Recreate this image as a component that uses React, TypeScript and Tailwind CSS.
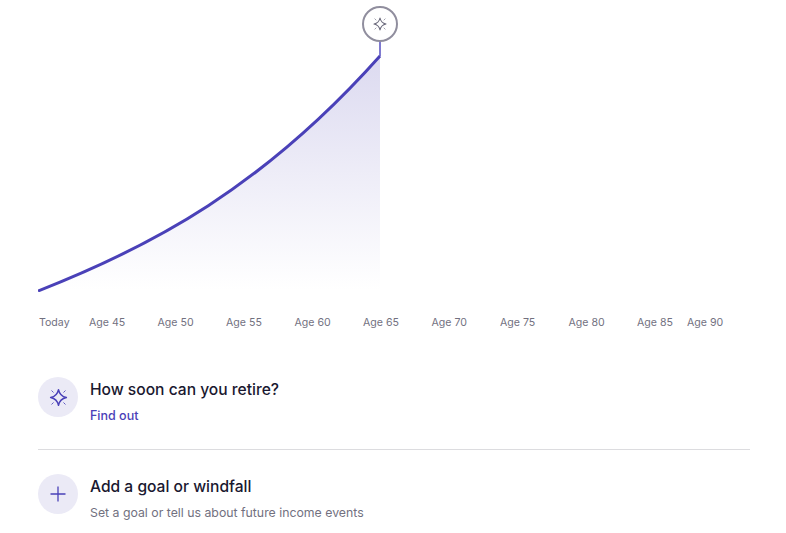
function Sparkle({ size, color }: { size: number; color: string }) {
  return (
    <svg width={size} height={size} viewBox="0 0 20 20" fill="none" stroke={color} strokeLinecap="round" strokeLinejoin="round">
      <path d="M10 2.5C10.8 6.5 13.5 9.2 17.5 10C13.5 10.8 10.8 13.5 10 17.5C9.2 13.5 6.5 10.8 2.5 10C6.5 9.2 9.2 6.5 10 2.5Z" strokeWidth="1.4" />
      <path d="M3.6 3.6L5 5M16.4 3.6L15 5M3.6 16.4L5 15M16.4 16.4L15 15" strokeWidth="0.8" />
    </svg>
  );
}

const ages = ["Age 45", "Age 50", "Age 55", "Age 60", "Age 65", "Age 70", "Age 75", "Age 80"];

export default function App() {
  return (
    <div className="w-[786px] h-[533px] overflow-hidden bg-white pl-[38px] pr-[36px] font-['Inter',sans-serif]">
      <div className="relative h-[290px] pt-[5px]">
        <svg width="712" height="292" viewBox="0 0 712 292" fill="none" className="block absolute left-0 top-0">
          <defs>
            <linearGradient id="area" x1="0" y1="56" x2="0" y2="290" gradientUnits="userSpaceOnUse">
              <stop offset="0" stopColor="#dcdaf0" />
              <stop offset="1" stopColor="#ffffff" />
            </linearGradient>
          </defs>
          <path d="M0 291C115 246 225 187 342 56V291Z" fill="url(#area)" />
          <path d="M342 41V56" stroke="#7f7ad0" strokeWidth="2" />
          <path d="M0 291C115 246 225 187 342 56" stroke="#4a41b8" strokeWidth="3" />
          <circle cx="342" cy="24" r="17" fill="#fff" stroke="#908e9e" strokeWidth="2" />
        </svg>
        <div className="absolute left-[334px] top-[16px]">
          <Sparkle size={16} color="#6b6a7c" />
        </div>
      </div>

      <div className="flex pt-[23px] text-[10.6px] leading-[20px] text-[#72717f]">
        <div className="w-[51px] pl-px">Today</div>
        {ages.map((age) => (
          <div key={age} className="w-[68.5px] shrink-0">
            {age}
          </div>
        ))}
        <div className="w-[50px] shrink-0">Age 85</div>
        <div>Age 90</div>
      </div>

      <div className="flex gap-3 pt-[44px] pb-[23px] border-b border-[#dcdcdf]">
        <div className="w-10 h-10 rounded-full bg-[#ebeaf6] flex items-center justify-center shrink-0">
          <Sparkle size={21} color="#4a41b8" />
        </div>
        <div>
          <div className="text-[15.6px] leading-6 font-medium text-[#1a1830] mt-px">How soon can you retire?</div>
          <div className="text-[12.5px] leading-5 font-medium text-[#4a41b8] mt-[4px]">Find out</div>
        </div>
      </div>

      <div className="flex gap-3 pt-[24px]">
        <div className="w-10 h-10 rounded-full bg-[#ebeaf6] flex items-center justify-center shrink-0">
          <svg width="18" height="18" viewBox="0 0 18 18" stroke="#4a41b8" strokeWidth="1.3" fill="none">
            <path d="M9 1.5V16.5M1.5 9H16.5" />
          </svg>
        </div>
        <div>
          <div className="text-[15.6px] leading-6 font-medium text-[#1a1830] mt-px">Add a goal or windfall</div>
          <div className="text-[12.3px] leading-5 text-[#72717f] mt-[4px]">Set a goal or tell us about future income events</div>
        </div>
      </div>
    </div>
  );
}
